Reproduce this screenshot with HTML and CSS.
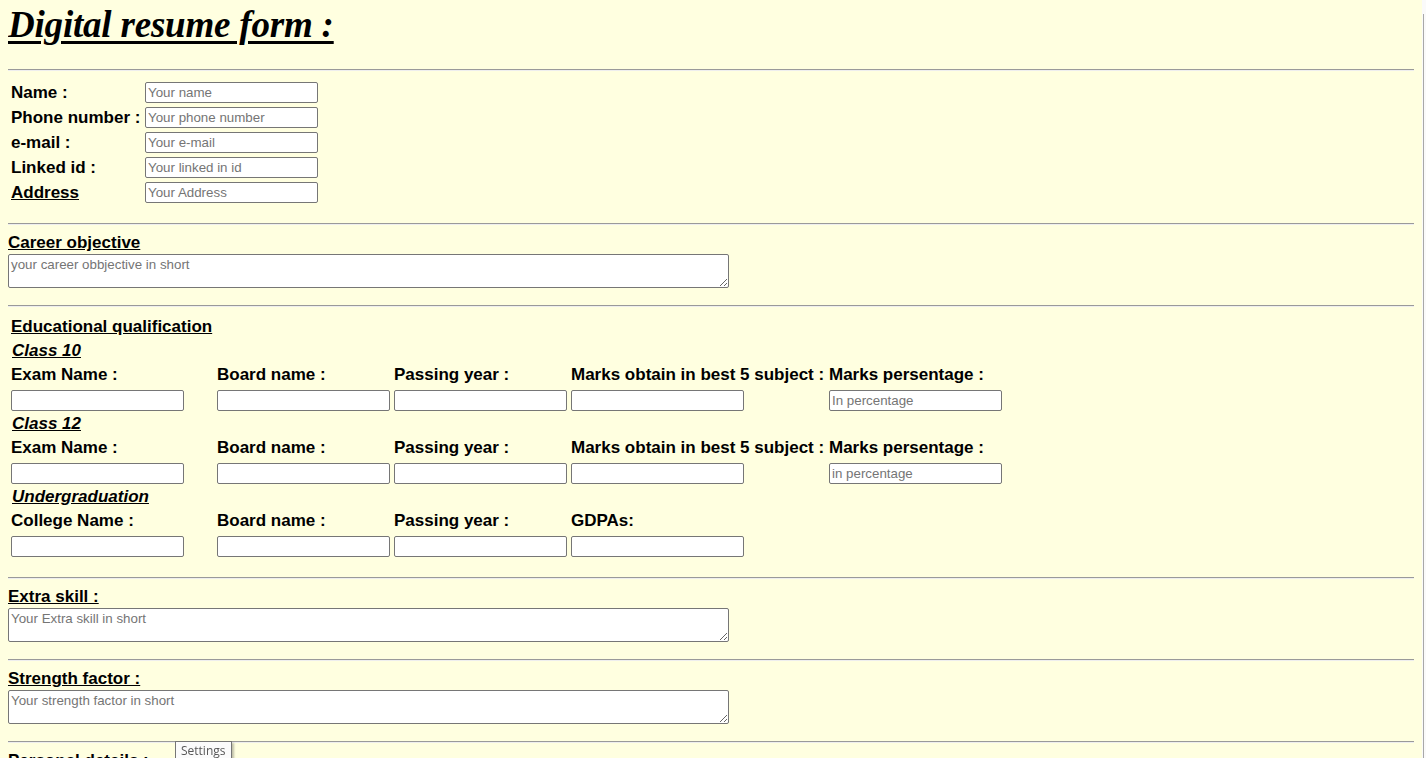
FILE: index.html
```html
<!DOCTYPE html>
<html lang="en">
<head>
<meta charset="utf-8">
<title>Digital resume form</title>
<link rel="stylesheet" href="styles.css">
</head>
<body>
<h1 class="title">Digital resume form :</h1>
<hr>
<div class="contact">
  <label class="lbl">Name :</label><input type="text" placeholder="Your name">
  <label class="lbl">Phone number :</label><input type="text" placeholder="Your phone number">
  <label class="lbl">e-mail :</label><input type="text" placeholder="Your e-mail">
  <label class="lbl">Linked id :</label><input type="text" placeholder="Your linked in id">
  <label class="lbl u">Address</label><input type="text" placeholder="Your Address">
</div>
<hr>
<section class="block">
  <div class="heading">Career objective</div>
  <textarea placeholder="your career obbjective in short"></textarea>
</section>
<hr>
<div class="edu">
  <div class="full heading">Educational qualification</div>
  <div class="full sub">Class 10</div>
  <div class="lbl">Exam Name :</div><div class="lbl">Board name :</div><div class="lbl">Passing year :</div><div class="lbl">Marks obtain in best 5 subject :</div><div class="lbl">Marks persentage :</div>
  <div class="cell"><input type="text"></div><div class="cell"><input type="text"></div><div class="cell"><input type="text"></div><div class="cell"><input type="text"></div><div class="cell"><input type="text" placeholder="In percentage"></div>
  <div class="full sub">Class 12</div>
  <div class="lbl">Exam Name :</div><div class="lbl">Board name :</div><div class="lbl">Passing year :</div><div class="lbl">Marks obtain in best 5 subject :</div><div class="lbl">Marks persentage :</div>
  <div class="cell"><input type="text"></div><div class="cell"><input type="text"></div><div class="cell"><input type="text"></div><div class="cell"><input type="text"></div><div class="cell"><input type="text" placeholder="in percentage"></div>
  <div class="full sub">Undergraduation</div>
  <div class="lbl">College Name :</div><div class="lbl">Board name :</div><div class="lbl">Passing year :</div><div class="lbl">GDPAs:</div><div class="lbl"></div>
  <div class="cell"><input type="text"></div><div class="cell"><input type="text"></div><div class="cell"><input type="text"></div><div class="cell"><input type="text"></div><div class="cell"></div>
</div>
<hr>
<section class="block">
  <div class="heading">Extra skill :</div>
  <textarea placeholder="Your Extra skill in short"></textarea>
</section>
<hr>
<section class="block">
  <div class="heading">Strength factor :</div>
  <textarea placeholder="Your strength factor in short"></textarea>
</section>
<hr>
<section class="block">
  <div class="heading">Personal details :</div>
</section>
<div class="tooltip">Settings</div>
<div class="scrollbar"></div>
</body>
</html>
```

FILE: styles.css
```css
html, body {
  background: #ffffe0;
}
body {
  margin: 0 12px 8px 8px;
  font-family: "Liberation Sans", Arial, sans-serif;
  color: #000;
}
.title {
  margin: 4px 0 23px;
  font-family: "Liberation Serif", "Times New Roman", serif;
  font-size: 37px;
  line-height: 42px;
  font-weight: bold;
  font-style: italic;
  text-decoration: underline;
  text-decoration-thickness: 3px;
  text-underline-offset: 4px;
  letter-spacing: -0.2px;
}
hr {
  margin: 8px 0;
  height: 0;
  border: 0;
  border-top: 1px solid #9a9a9a;
  border-bottom: 1px solid #eeeeee;
}
input {
  box-sizing: border-box;
  width: 173px;
  height: 21px;
  margin: 0;
  padding: 1px 2px;
  border: 1px solid #767676;
  border-radius: 2px;
  background: #fff;
  font-family: "Liberation Sans", Arial, sans-serif;
  font-size: 13.33px;
}
input::placeholder, textarea::placeholder {
  color: #757575;
}
.lbl {
  font-size: 17px;
  font-weight: bold;
  white-space: nowrap;
}
.u {
  text-decoration: underline;
}
.contact {
  display: grid;
  grid-template-columns: 134px 173px;
  row-gap: 4px;
  align-items: center;
  padding: 3px 0 12px 3px;
}
.contact .lbl {
  line-height: 20px;
}
.block {
  display: flex;
  flex-direction: column;
  align-items: flex-start;
  gap: 1px;
  padding-bottom: 9px;
}
.heading {
  font-size: 17px;
  line-height: 20px;
  font-weight: bold;
  text-decoration: underline;
  white-space: nowrap;
}
textarea {
  box-sizing: border-box;
  width: 721px;
  height: 34px;
  margin: 0;
  padding: 2px;
  border: 1px solid #767676;
  border-radius: 2px;
  background: #fff;
  font-family: "Liberation Sans", Arial, sans-serif;
  font-size: 13.33px;
  line-height: 15px;
}
.edu {
  display: grid;
  grid-template-columns: 202px 173px 173px 254px 173px;
  column-gap: 4px;
  padding: 0 0 11px 3px;
}
.edu .full {
  grid-column: 1 / -1;
  line-height: 24px;
}
.edu .heading {
  line-height: 24px;
}
.sub {
  font-size: 17px;
  font-weight: bold;
  font-style: italic;
  text-decoration: underline;
  padding-left: 1px;
}
.edu .lbl {
  line-height: 24px;
}
.cell {
  box-sizing: border-box;
  height: 25px;
  padding-top: 3px;
}
.tooltip {
  position: fixed;
  left: 175px;
  top: 741px;
  padding: 1px 5px 3px;
  background: #fbfbfb;
  border: 1px solid #767676;
  box-shadow: 2px 2px 2px rgba(0, 0, 0, 0.25);
  font-family: "Open Sans", "Noto Sans", sans-serif;
  font-size: 12px;
  line-height: 16px;
  color: #575757;
}
.scrollbar {
  position: fixed;
  top: 0;
  right: 0;
  width: 4px;
  height: 100%;
  background: #fafafa;
}
.scrollbar::after {
  content: "";
  position: absolute;
  left: 1px;
  top: 14px;
  bottom: 0;
  width: 1px;
  background: #a8a8a8;
}
```
